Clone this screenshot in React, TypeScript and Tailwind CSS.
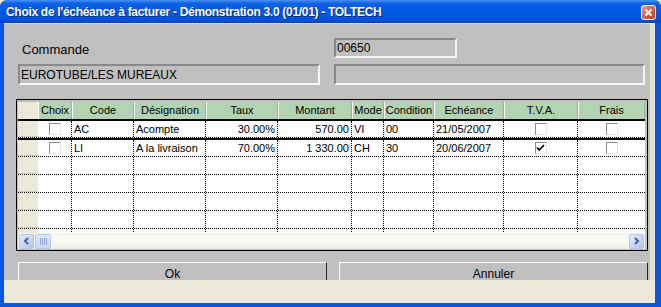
import React from "react";

const GRID =
  "grid grid-cols-[20px_34px_62px_72px_72px_74px_32px_50px_70px_74px_67px]";

type Row = {
  code: string;
  des: string;
  taux: string;
  montant: string;
  mode: string;
  cond: string;
  ech: string;
  tva: boolean;
};

const rows: Row[] = [
  { code: "AC", des: "Acompte", taux: "30.00%", montant: "570.00", mode: "VI", cond: "00", ech: "21/05/2007", tva: false },
  { code: "LI", des: "A la livraison", taux: "70.00%", montant: "1 330.00", mode: "CH", cond: "30", ech: "20/06/2007", tva: true },
];

function Check({ checked }: { checked?: boolean }) {
  return (
    <div className="w-[12px] h-[12px] border-t border-l border-[#8c8c8c] border-b border-r border-b-[#e4e4e4] border-r-[#e4e4e4] bg-white flex items-center justify-center">
      {checked && (
        <svg width="9" height="8" viewBox="0 0 9 8">
          <path d="M1 3.5 L3.3 6 L8 1" stroke="#000" strokeWidth="1.8" fill="none" />
        </svg>
      )}
    </div>
  );
}

function Field({ className, children }: { className: string; children?: React.ReactNode }) {
  return (
    <div
      className={
        "border-2 border-t-[#8a8a8a] border-l-[#8a8a8a] border-b-[#f4f4f4] border-r-[#f4f4f4] bg-[#c0c0c0] flex items-center pl-[1px] text-[12px] text-black leading-none " +
        className
      }
    >
      {children}
    </div>
  );
}

const cellD = "border-r border-dotted border-black h-full flex items-center overflow-hidden whitespace-nowrap text-black";

function DataRow({ r, h }: { r?: Row; h: string }) {
  return (
    <div className={GRID + " bg-white border-b border-dotted border-black " + h}>
      <div className="bg-[#ece9d8] border-b border-[#cfcbb9] h-full -mb-[1px]"></div>
      <div className="h-full flex items-center justify-center border-r border-dotted border-black">
        {r && <Check />}
      </div>
      <div className={cellD + " pl-[2px]"}>{r?.code}</div>
      <div className={cellD + " pl-[2px]"}>{r?.des}</div>
      <div className={cellD + " justify-end pr-[2px]"}>{r?.taux}</div>
      <div className={cellD + " justify-end pr-[2px]"}>{r?.montant}</div>
      <div className={cellD + " pl-[2px]"}>{r?.mode}</div>
      <div className={cellD + " pl-[2px]"}>{r?.cond}</div>
      <div className={cellD + " pl-[2px]"}>{r?.ech}</div>
      <div className={cellD + " justify-center"}>{r && <Check checked={r.tva} />}</div>
      <div className="h-full flex items-center justify-center">{r && <Check />}</div>
    </div>
  );
}

const headers = ["Choix", "Code", "Désignation", "Taux", "Montant", "Mode", "Condition", "Echéance", "T.V.A.", "Frais"];

export default function App() {
  return (
    <div className="w-[661px] h-[307px] font-['Liberation_Sans',Arial,sans-serif] bg-[#ece9d8]">
      <div className="w-[661px] h-[307px] bg-[#0a55dc] rounded-t-[7px] flex flex-col overflow-hidden">
        {/* Title bar */}
        <div className="h-[23px] shrink-0 bg-[linear-gradient(180deg,#4a93f5_0%,#0f63e6_14%,#0257e6_45%,#0053e0_80%,#0046c4_100%)] flex items-center justify-between pl-[6px] pr-[5px]">
          <span className="text-white font-bold text-[12px] tracking-[-0.3px] leading-none pt-[1px] [text-shadow:1px_1px_0_#0a2a80]">
            Choix de l'échéance à facturer - Démonstration 3.0 (01/01) - TOLTECH
          </span>
          <div className="w-[15px] h-[15px] mt-[1px] rounded-[3px] border border-white bg-[linear-gradient(135deg,#f0a088_0%,#e2613e_45%,#c4401c_100%)] flex items-center justify-center">
            <svg width="9" height="9" viewBox="0 0 9 9">
              <path d="M1.5 1.5 L7.5 7.5 M7.5 1.5 L1.5 7.5" stroke="#fff" strokeWidth="1.8" />
            </svg>
          </div>
        </div>

        {/* Body */}
        <div className="flex-1 flex flex-col pl-[4px] pr-[6px] pb-[4px]">
          <div className="h-[257px] flex overflow-hidden">
            <div className="w-[646px] h-[257px] bg-[#c0c0c0] overflow-hidden pl-[12px] pt-[14px] border-t border-[#d8d8d8]">
              {/* row 1 */}
              <div className="flex h-[20px] items-center">
                <div className="w-[318px] pl-[6px] text-[13px] text-black leading-none pt-[2px]">Commande</div>
                <Field className="w-[123px] h-[20px]">00650</Field>
              </div>
              {/* row 2 */}
              <div className="flex h-[21px] mt-[6px]">
                <Field className="ml-[2px] w-[302px] h-[21px]">EUROTUBE/LES MUREAUX</Field>
                <Field className="ml-[14px] w-[311px] h-[21px]" />
              </div>
              {/* table */}
              <div className="mt-[14px] w-[632px] h-[152px] border border-black bg-[#c0c0c0] pl-[1px] pt-[2px] text-[11px] text-black leading-none">
                <div className={GRID + " h-[17px]"}>
                  <div className="bg-[#ece9d8]"></div>
                  {headers.map((h) => (
                    <div
                      key={h}
                      className="bg-[#b2d3b2] border-l border-white border-r border-r-[#93b493] flex items-center justify-center whitespace-nowrap overflow-hidden"
                    >
                      {h}
                    </div>
                  ))}
                </div>
                <div className="h-[2px] bg-black w-[627px]"></div>
                <div className="h-[112px] w-[627px] overflow-hidden bg-white">
                  <DataRow r={rows[0]} h="h-[17px]" />
                  <div className="h-[2px] bg-black"></div>
                  <DataRow r={rows[1]} h="h-[17px]" />
                  <DataRow h="h-[18px]" />
                  <DataRow h="h-[18px]" />
                  <DataRow h="h-[18px]" />
                  <DataRow h="h-[18px]" />
                  <DataRow h="h-[18px]" />
                </div>
                {/* scrollbar */}
                <div className="w-[627px] h-[16px] bg-[linear-gradient(180deg,#f3f3ee_0%,#fbfbf8_50%,#eeede5_100%)] flex items-center px-[1px]">
                  <div className="w-[15px] h-[15px] rounded-[2px] border border-[#b4c8f6] bg-[linear-gradient(135deg,#e2ebfe_0%,#c3d4fb_60%,#b0c6f8_100%)] flex items-center justify-center">
                    <svg width="7" height="8" viewBox="0 0 7 8">
                      <path d="M5 1 L2 4 L5 7" stroke="#4d6185" strokeWidth="2" fill="none" />
                    </svg>
                  </div>
                  <div className="ml-[1px] w-[16px] h-[15px] rounded-[2px] border border-[#b4c8f6] bg-[linear-gradient(180deg,#dfe8fd_0%,#c9d8fc_100%)] flex items-center justify-center gap-[1px]">
                    <div className="w-[1px] h-[7px] bg-[#8ea6e4]"></div>
                    <div className="w-[1px] h-[7px] bg-[#8ea6e4]"></div>
                    <div className="w-[1px] h-[7px] bg-[#8ea6e4]"></div>
                    <div className="w-[1px] h-[7px] bg-[#8ea6e4]"></div>
                  </div>
                  <div className="flex-1"></div>
                  <div className="w-[15px] h-[15px] rounded-[2px] border border-[#b4c8f6] bg-[linear-gradient(135deg,#e2ebfe_0%,#c3d4fb_60%,#b0c6f8_100%)] flex items-center justify-center">
                    <svg width="7" height="8" viewBox="0 0 7 8">
                      <path d="M2 1 L5 4 L2 7" stroke="#4d6185" strokeWidth="2" fill="none" />
                    </svg>
                  </div>
                </div>
              </div>
              {/* buttons */}
              <div className="flex mt-[11px]">
                <div className="ml-[2px] w-[309px] h-[30px] border-t border-l border-white border-r border-r-[#202020] bg-[#c0c0c0] flex justify-center pt-[5px] text-[12px] text-black leading-none">
                  Ok
                </div>
                <div className="ml-[12px] w-[309px] h-[30px] border-t border-l border-white border-r border-r-[#202020] bg-[#c0c0c0] flex justify-center pt-[5px] text-[12px] text-black leading-none">
                  Annuler
                </div>
              </div>
            </div>
            <div className="w-[5px] h-[257px] bg-[#e4e2d6]"></div>
          </div>
          <div className="h-[23px] bg-[#ece9d8]"></div>
        </div>
      </div>
    </div>
  );
}
